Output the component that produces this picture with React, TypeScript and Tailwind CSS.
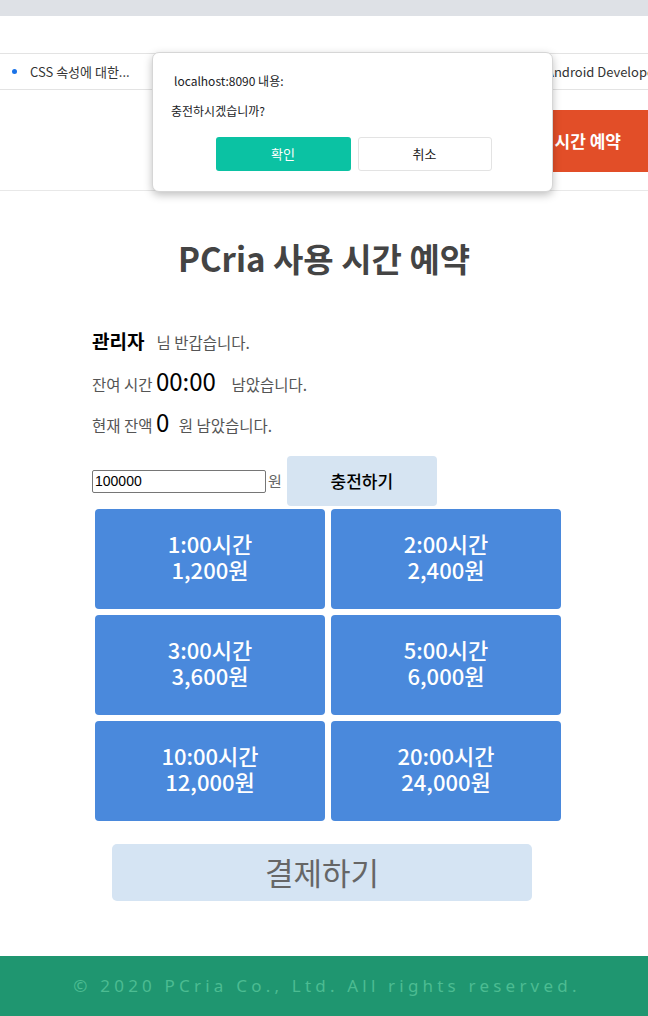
import React from "react";

const plans = [
  { time: "1:00시간", price: "1,200원" },
  { time: "2:00시간", price: "2,400원" },
  { time: "3:00시간", price: "3,600원" },
  { time: "5:00시간", price: "6,000원" },
  { time: "10:00시간", price: "12,000원" },
  { time: "20:00시간", price: "24,000원" },
];

const font = "font-['Noto_Sans_CJK_KR','Noto_Sans',sans-serif]";

const ConfirmDialog = () => (
  <div className="absolute left-[152px] top-[52px] w-[401px] h-[140px] bg-white rounded-[7px] border border-[#d6d6d6] shadow-[0_3px_8px_rgba(0,0,0,0.25)] px-[18px] pt-[18px]">
    <p className="text-[12px] leading-[20px] text-[#202124] pl-[3px]">localhost:8090 내용:</p>
    <p className="text-[12px] leading-[20px] text-[#202124] mt-[10px]">충전하시겠습니까?</p>
    <div className="flex justify-center gap-[7px] mt-[16px] pl-[2px]">
      <button className="w-[135px] h-[34px] rounded-[3px] bg-[#0bc2a3] text-white text-[13px]">
        확인
      </button>
      <button className="w-[134px] h-[34px] rounded-[3px] bg-white border border-[#e3e3e3] text-[#222] text-[13px]">
        취소
      </button>
    </div>
  </div>
);

export default function App() {
  return (
    <div className={`relative w-[648px] h-[1016px] flex flex-col bg-white overflow-hidden ${font}`}>
      {/* browser chrome */}
      <div className="h-[16px] bg-[#dee1e6]" />
      <div className="h-[37px] bg-white" />
      <div className="h-[37px] border-t border-b border-[#e3e3e3] flex items-center text-[13px] text-[#333] whitespace-nowrap overflow-hidden">
        <div className="w-[546px] shrink-0 flex items-center">
          <span className="ml-[12px] w-[5px] h-[5px] rounded-full bg-[#1a73e8]" />
          <span className="ml-[13px]">CSS 속성에 대한...</span>
        </div>
        <span className="shrink-0">Android Developers</span>
      </div>

      {/* page header */}
      <header className="h-[101px] border-b border-[#e8e8e8] flex items-center justify-end">
        <a className="h-[62px] flex items-center bg-[#e24e28] text-white font-bold text-[17px] pl-[30px] pr-[27px] mt-[1px] whitespace-nowrap">
          사용 시간 예약
        </a>
      </header>

      <main className="flex flex-col">
        <h1 className="mt-[47px] text-center text-[33px] leading-[40px] font-bold text-[#444]">
          PCria 사용 시간 예약
        </h1>

        <div className="pl-[92px] mt-[44px] text-[#555]">
          <p className="h-[41px] leading-[41px] text-[15.5px]">
            <span className="text-[19px] leading-none font-bold text-black mr-[12px]">관리자</span>
            님 반갑습니다.
          </p>
          <p className="h-[42px] leading-[42px] text-[15.5px]">
            잔여 시간 <span className="text-[24px] leading-none text-black mr-[12px]">00:00</span> 남았습니다.
          </p>
          <p className="h-[41px] leading-[41px] text-[15.5px]">
            현재 잔액 <span className="text-[24px] leading-none text-black mr-[6px]">0</span> 원 남았습니다.
          </p>

          <div className="flex items-center mt-[10px]">
            <input
              defaultValue="100000"
              className="w-[174px] h-[23px] border border-[#767676] rounded-[2px] px-[2px] text-[14px] text-black font-['Liberation_Sans',sans-serif]"
            />
            <span className="ml-[2px] text-[15px] text-[#666]">원</span>
            <button className="ml-[5px] w-[150px] h-[50px] rounded-[4px] bg-[#d6e4f2] text-[17px] font-medium text-black">
              충전하기
            </button>
          </div>

          <div className="grid grid-cols-[230px_230px] gap-[6px] ml-[3px] mt-[3px]">
            {plans.map((p) => (
              <button
                key={p.time}
                className="h-[100px] rounded-[4px] bg-[#4a89dc] text-white text-[22px] font-medium leading-[28px] flex flex-col items-center justify-start pt-[20px]"
              >
                <span>{p.time}</span>
                <span className="-mt-[2px]">{p.price}</span>
              </button>
            ))}
          </div>

          <button className="ml-[20px] mt-[23px] w-[420px] h-[57px] rounded-[5px] bg-[#d5e4f3] text-[31px] text-[#666]">
            결제하기
          </button>
        </div>
      </main>

      <footer className="mt-auto h-[60px] bg-[#1f9670] flex items-center justify-center">
        <p className="text-[17px] tracking-[4.2px] text-[#4cbc92] font-['Noto_Sans',sans-serif] pl-[6px]">
          © 2020 PCria Co., Ltd. All rights reserved.
        </p>
      </footer>

      <ConfirmDialog />
    </div>
  );
}
